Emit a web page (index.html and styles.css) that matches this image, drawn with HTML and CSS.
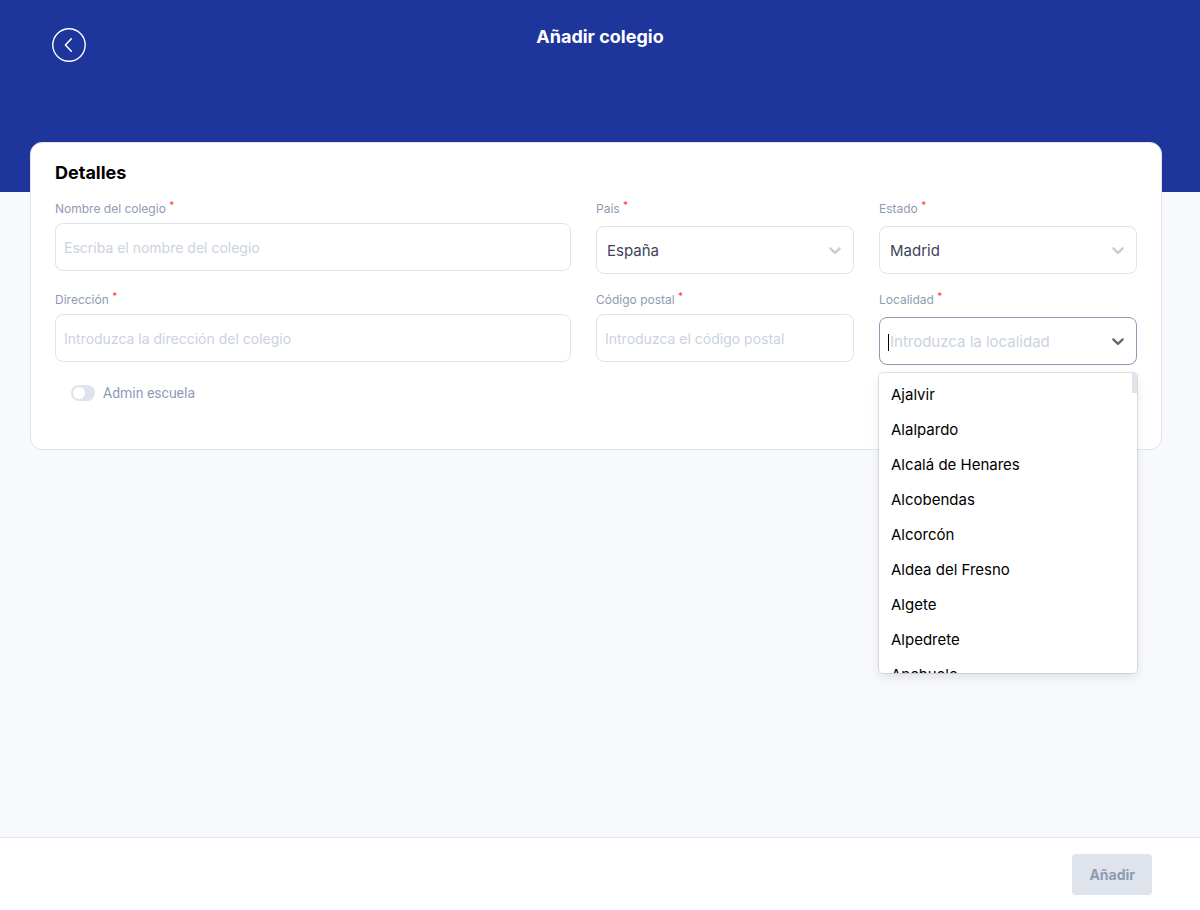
FILE: index.html
```html
<!DOCTYPE html>
<html lang="es">
<head>
<meta charset="utf-8">
<meta name="viewport" content="width=device-width, initial-scale=1">
<title>Añadir colegio</title>
<link rel="stylesheet" href="styles.css">
</head>
<body class="page">
  <header class="header">
    <button class="back" type="button" aria-label="Volver">
      <svg width="34" height="34" viewBox="0 0 34 34" fill="none" stroke="#fff" stroke-linecap="round" stroke-linejoin="round">
        <circle cx="17" cy="17" r="16.2" stroke-width="1.4"/>
        <path d="M19.3 10.8 13.4 17l5.9 6.2" stroke-width="1.6"/>
      </svg>
    </button>
    <h1 class="title">Añadir colegio</h1>
  </header>

  <main class="main">
    <form class="card" id="school">
      <h2 class="heading">Detalles</h2>
      <div class="grid">
        <div class="field">
          <label class="label" for="name">Nombre del colegio <span class="required">*</span></label>
          <input class="control" id="name" type="text" placeholder="Escriba el nombre del colegio">
        </div>
        <div class="field field-select">
          <label class="label" for="country">País <span class="required">*</span></label>
          <div class="select">
            <select class="control choice" id="country"><option>España</option></select>
            <svg class="chevron" width="20" height="20" viewBox="0 0 20 20"><path d="M4.516 7.548c0.436-0.446 1.043-0.481 1.576 0l3.908 3.747 3.908-3.747c0.533-0.481 1.141-0.446 1.574 0 0.436 0.445 0.408 1.197 0 1.615-0.406 0.418-4.695 4.502-4.695 4.502-0.217 0.223-0.502 0.335-0.787 0.335s-0.57-0.112-0.789-0.335c0 0-4.287-4.084-4.695-4.502s-0.436-1.17 0-1.615z"/></svg>
          </div>
        </div>
        <div class="field field-select">
          <label class="label" for="state">Estado <span class="required">*</span></label>
          <div class="select">
            <select class="control choice" id="state"><option>Madrid</option></select>
            <svg class="chevron" width="20" height="20" viewBox="0 0 20 20"><path d="M4.516 7.548c0.436-0.446 1.043-0.481 1.576 0l3.908 3.747 3.908-3.747c0.533-0.481 1.141-0.446 1.574 0 0.436 0.445 0.408 1.197 0 1.615-0.406 0.418-4.695 4.502-4.695 4.502-0.217 0.223-0.502 0.335-0.787 0.335s-0.57-0.112-0.789-0.335c0 0-4.287-4.084-4.695-4.502s-0.436-1.17 0-1.615z"/></svg>
          </div>
        </div>
        <div class="field">
          <label class="label" for="address">Dirección <span class="required">*</span></label>
          <input class="control" id="address" type="text" placeholder="Introduzca la dirección del colegio">
        </div>
        <div class="field">
          <label class="label" for="postal">Código postal <span class="required">*</span></label>
          <input class="control" id="postal" type="text" placeholder="Introduzca el código postal">
        </div>
        <div class="field field-select">
          <label class="label" for="city">Localidad <span class="required">*</span></label>
          <div class="select">
            <input class="control choice open" id="city" type="text" role="combobox" aria-expanded="true" aria-controls="cities" placeholder="Introduzca la localidad">
            <span class="caret"></span>
            <svg class="chevron chevron-open" width="20" height="20" viewBox="0 0 20 20"><path d="M4.516 7.548c0.436-0.446 1.043-0.481 1.576 0l3.908 3.747 3.908-3.747c0.533-0.481 1.141-0.446 1.574 0 0.436 0.445 0.408 1.197 0 1.615-0.406 0.418-4.695 4.502-4.695 4.502-0.217 0.223-0.502 0.335-0.787 0.335s-0.57-0.112-0.789-0.335c0 0-4.287-4.084-4.695-4.502s-0.436-1.17 0-1.615z"/></svg>
            <div class="menu">
              <ul class="options" id="cities" role="listbox">
                <li class="option" role="option">Ajalvir</li>
                <li class="option" role="option">Alalpardo</li>
                <li class="option" role="option">Alcalá de Henares</li>
                <li class="option" role="option">Alcobendas</li>
                <li class="option" role="option">Alcorcón</li>
                <li class="option" role="option">Aldea del Fresno</li>
                <li class="option" role="option">Algete</li>
                <li class="option" role="option">Alpedrete</li>
                <li class="option" role="option">Anchuelo</li>
              </ul>
              <span class="thumb"></span>
            </div>
          </div>
        </div>
      </div>
      <label class="toggle" for="admin">
        <input class="switch" id="admin" type="checkbox" role="switch">
        Admin escuela
      </label>
    </form>
  </main>

  <footer class="footer">
    <button class="submit" type="submit" form="school" disabled>Añadir</button>
  </footer>
</body>
</html>
```
FILE: styles.css
```css
* {
  box-sizing: border-box;
}

.page {
  margin: 0;
  min-height: 100vh;
  display: flex;
  flex-direction: column;
  background: #f8f9fd;
  color: #000;
  font-family: Inter, "Liberation Sans", sans-serif;
}

.header {
  display: grid;
  grid-template-columns: 1fr auto 1fr;
  align-items: start;
  height: 192px;
  padding: 24px 52px;
  background: #1e359c;
}

.back {
  justify-self: start;
  display: flex;
  margin: 4px 0 0;
  padding: 0;
  border: 0;
  background: none;
}

.title {
  margin: 0;
  color: #fff;
  font-size: 18px;
  font-weight: 700;
  line-height: 26px;
}

.main {
  flex: 1;
  margin-top: -50px;
  padding: 0 38px 40px 30px;
}

.card {
  padding: 18px 24px 44px;
  border: 1px solid #dfe4ec;
  border-radius: 12px;
  background: #fff;
}

.heading {
  margin: 0 0 14px;
  font-size: 18px;
  font-weight: 700;
  line-height: 24px;
}

.grid {
  display: grid;
  grid-template-columns: 2fr 1fr 1fr;
  gap: 16px 25px;
}

.field {
  display: flex;
  flex-direction: column;
  gap: 4px;
  min-width: 0;
}

.field-select {
  gap: 7px;
}

.label {
  color: #8f9bb3;
  font-size: 12px;
  line-height: 20px;
}

.required {
  color: #ff3b30;
  font-size: 10px;
  line-height: 0;
  vertical-align: 4px;
}

.control {
  width: 100%;
  height: 48px;
  padding: 0 8px;
  border: 1px solid #dfe4ec;
  border-radius: 8px;
  outline: 0;
  background: #fff;
  color: #3f4456;
  font: 400 14px Inter, "Liberation Sans", sans-serif;
}

.control::placeholder {
  color: #cbd2e0;
  opacity: 1;
}

.select {
  position: relative;
}

.choice {
  display: block;
  appearance: none;
  padding: 0 40px 0 10px;
  font-size: 15px;
}

.open {
  border-color: #8f9bb3;
}

.caret {
  position: absolute;
  top: 17px;
  left: 9px;
  width: 1px;
  height: 17px;
  background: #000;
}

.chevron {
  position: absolute;
  top: 14px;
  right: 9px;
  fill: #ccc;
  pointer-events: none;
}

.chevron-open {
  fill: #666;
}

.menu {
  position: absolute;
  top: 100%;
  left: 0;
  right: 0;
  z-index: 1;
  height: 300px;
  margin-top: 8px;
  overflow: hidden;
  border-radius: 4px;
  background: #fff;
  box-shadow: 0 0 0 1px rgba(0, 0, 0, 0.1), 0 4px 11px rgba(0, 0, 0, 0.1);
}

.options {
  margin: 0;
  padding: 4px 0;
  list-style: none;
}

.option {
  padding: 0 12px;
  font-size: 15px;
  line-height: 35px;
}

.thumb {
  position: absolute;
  top: 0;
  right: 0;
  width: 5px;
  height: 20px;
  background: #dfe4ec;
}

.toggle {
  display: inline-flex;
  align-items: center;
  gap: 8px;
  margin: 18px 0 0 16px;
  color: #8f9bb3;
  font: 14px/20px Roboto, sans-serif;
}

.switch {
  appearance: none;
  width: 24px;
  height: 16px;
  margin: 0;
  padding: 2px;
  border-radius: 8px;
  background: #dfe4ec;
}

.switch::before {
  content: "";
  display: block;
  width: 12px;
  height: 12px;
  border-radius: 50%;
  background: #fff;
}

.switch:checked {
  padding-left: 10px;
  background: #1e359c;
}

.footer {
  display: flex;
  justify-content: flex-end;
  padding: 16px 48px 15px;
  border-top: 1px solid #dfe4ec;
  background: #fff;
}

.submit {
  padding: 0 17px;
  border: 0;
  border-radius: 4px;
  background: #dfe4ec;
  color: #8f9bb3;
  font: 700 14px/41px Inter, "Liberation Sans", sans-serif;
}
```
